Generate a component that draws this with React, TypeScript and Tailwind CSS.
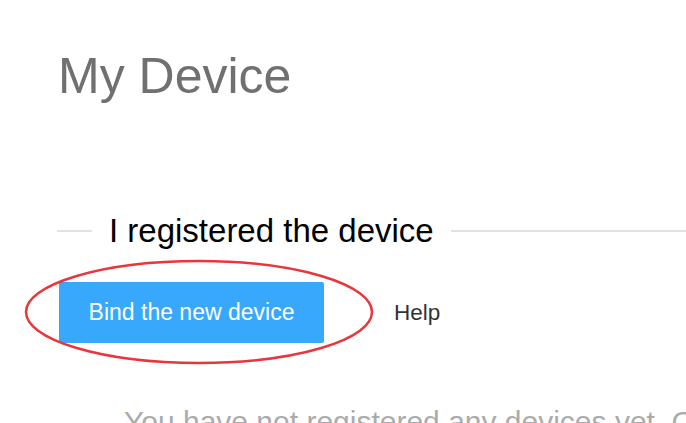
import React, { FC } from 'react';

const font = { fontFamily: '"Liberation Sans", Arial, sans-serif' };

const App: FC = () => {
  return (
    <div className="relative h-[423px] w-[686px] overflow-hidden bg-white pl-[57px]" style={font}>
      <h1 className="mt-[51px] ml-[1px] text-[50px] leading-none font-normal text-[#707070]">My Device</h1>

      <div className="mt-[113px] flex items-center gap-[17px]">
        <div className="h-[2px] w-[35px] bg-[#e2e2e2]" />
        <h2 className="text-[33px] leading-none font-normal whitespace-nowrap text-black">I registered the device</h2>
        <div className="h-[2px] flex-1 bg-[#e2e2e2]" />
      </div>

      <div className="relative mt-[35px] flex items-center">
        <button
          type="button"
          className="ml-[2px] h-[61px] w-[265px] rounded-[2px] bg-[#38a8fd] text-[23px] text-white"
        >
          Bind the new device
        </button>
        <a className="ml-[70px] text-[22.5px] text-[#333333]">Help</a>
        <svg
          className="pointer-events-none absolute top-[-23px] left-[-33px]"
          width="352"
          height="108"
          viewBox="0 0 352 108"
        >
          <ellipse cx="175" cy="53" rx="173" ry="51" fill="none" stroke="#e8363c" strokeWidth="2.5" />
        </svg>
      </div>

      <p className="mt-[64px] ml-[67px] text-[30px] leading-none whitespace-nowrap text-[#ababab]">
        You have not registered any devices yet. Click the button above to bind one.
      </p>
    </div>
  );
};

export default App;
